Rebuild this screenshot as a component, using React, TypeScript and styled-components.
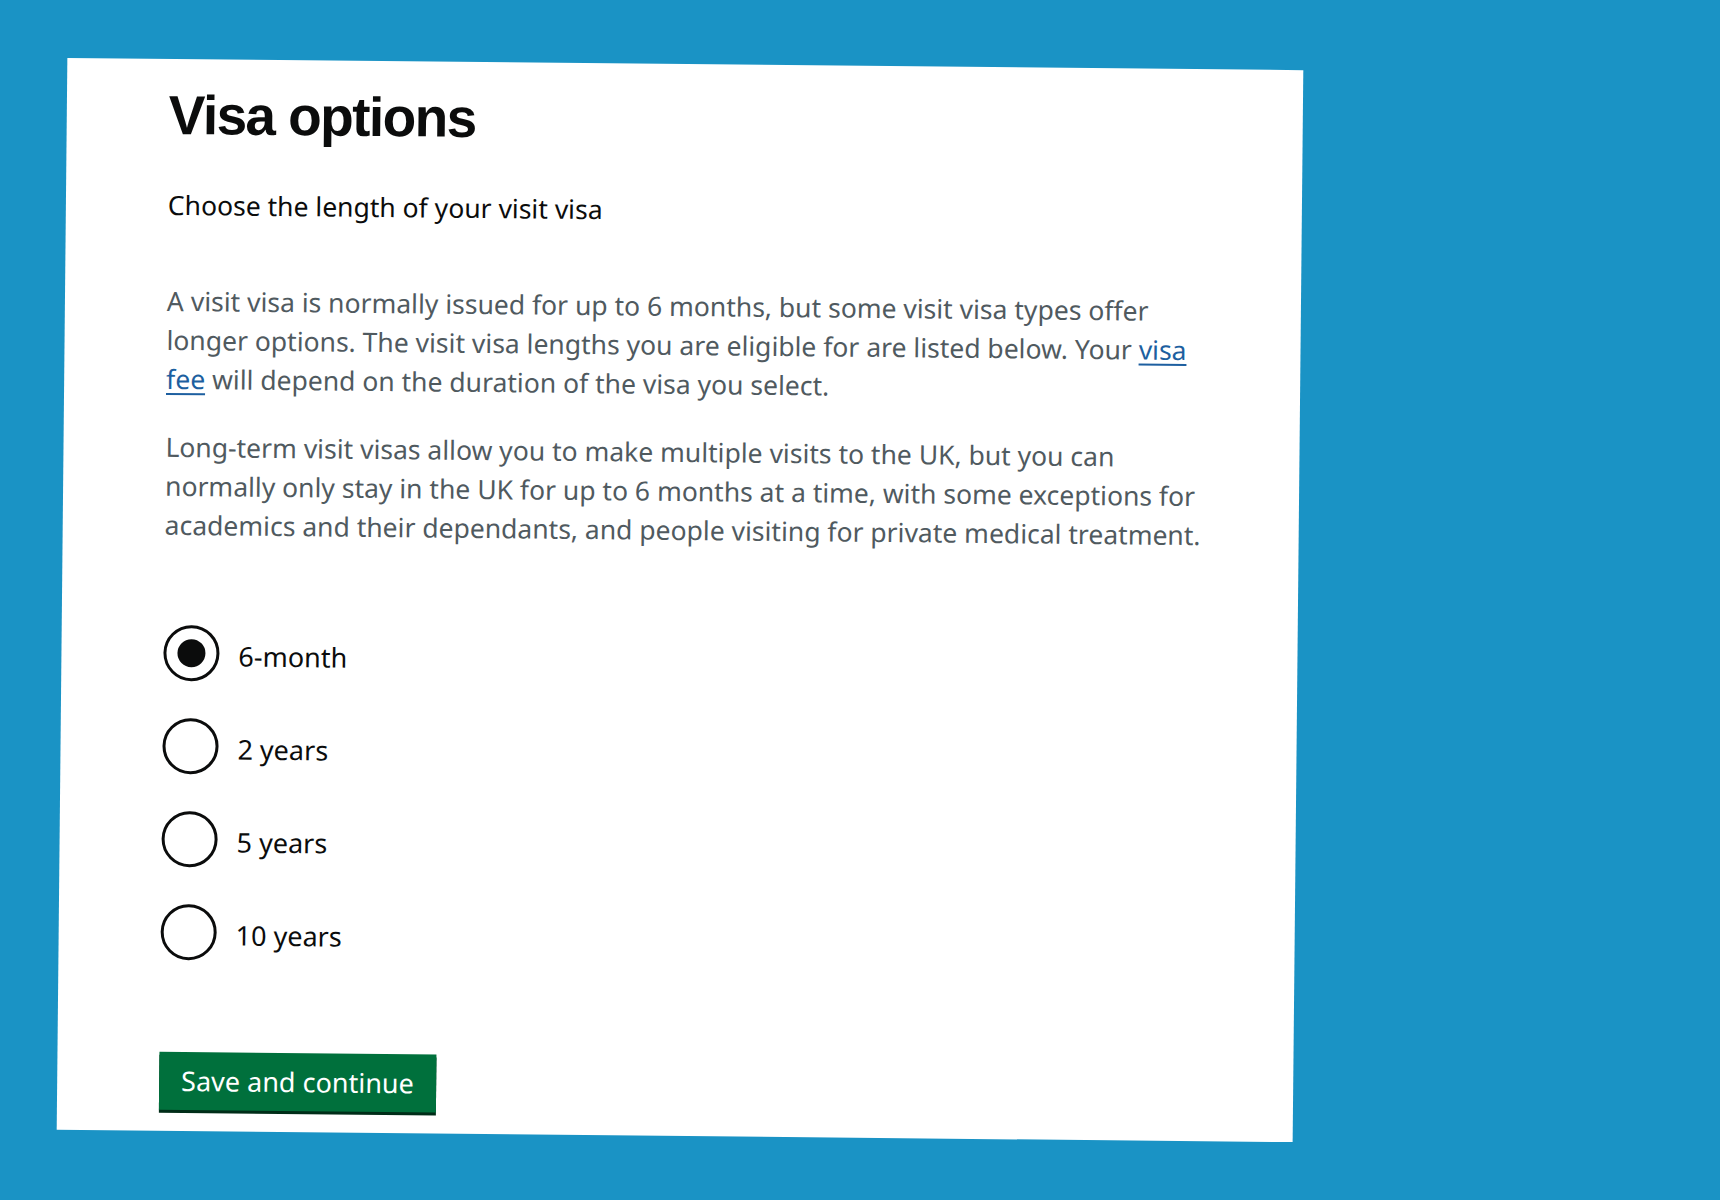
import React, { useState } from "react";
import styled, { createGlobalStyle } from "styled-components";

const GlobalStyle = createGlobalStyle`
  html, body {
    margin: 0;
    padding: 0;
    background: #1a93c5;
  }
  body {
    font-family: "Noto Sans", "Liberation Sans", Arial, sans-serif;
    color: #0b0c0c;
  }
`;

const Stage = styled.div`
  width: 1720px;
  height: 1200px;
  overflow: hidden;
  background: #1a93c5;
  padding: 64px 0 0 61.5px;
  box-sizing: border-box;
`;

const Card = styled.main`
  width: 1236px;
  height: 1072px;
  background: #ffffff;
  box-sizing: border-box;
  padding: 26px 0 0 102px;
  transform: rotate(0.57deg);
  display: flex;
  flex-direction: column;
  align-items: flex-start;
`;

const Title = styled.h1`
  margin: 0;
  font-family: "Liberation Sans", Arial, sans-serif;
  font-size: 55px;
  line-height: 60px;
  font-weight: 700;
  letter-spacing: -1.6px;
  color: #0b0c0c;
`;

const Lead = styled.p`
  margin: 41px 0 0;
  font-size: 26.5px;
  line-height: 39px;
  color: #0b0c0c;
`;

const Body = styled.p<{ $gap: number }>`
  margin: ${(p) => p.$gap}px 0 0;
  font-size: 26.5px;
  line-height: 39px;
  color: #505a5f;
  white-space: nowrap;
`;

const TextLink = styled.a`
  color: #1d5fa0;
  text-decoration: underline;
  text-decoration-thickness: 2px;
  text-underline-offset: 4px;
`;

const RadioList = styled.div`
  margin-top: 80px;
  display: flex;
  flex-direction: column;
  gap: 37px;
`;

const RadioRow = styled.label`
  display: flex;
  align-items: center;
  gap: 19px;
  cursor: pointer;
`;

const Circle = styled.span<{ $checked: boolean }>`
  width: 56px;
  height: 56px;
  border: 3px solid #0b0c0c;
  border-radius: 50%;
  box-sizing: border-box;
  display: flex;
  align-items: center;
  justify-content: center;
  flex-shrink: 0;

  &::after {
    content: "";
    width: 28px;
    height: 28px;
    border-radius: 50%;
    background: #0b0c0c;
    display: ${(p) => (p.$checked ? "block" : "none")};
  }
`;

const RadioText = styled.span`
  font-size: 27px;
  line-height: 32px;
  color: #0b0c0c;
  padding-top: 6px;
`;

const Button = styled.button`
  margin-top: 92px;
  background: #00703c;
  color: #ffffff;
  border: 0;
  border-radius: 0;
  font-family: inherit;
  font-size: 27px;
  line-height: 32px;
  padding: 13px 22px;
  box-shadow: 0 3px 0 #002d18;
  cursor: pointer;
`;

const options = ["6-month", "2 years", "5 years", "10 years"];

export default function App() {
  const [choice, setChoice] = useState("6-month");

  return (
    <>
      <GlobalStyle />
      <Stage>
        <Card>
          <Title>Visa options</Title>
          <Lead>Choose the length of your visit visa</Lead>
          <Body $gap={57}>
            A visit visa is normally issued for up to 6 months, but some visit visa types offer
            <br />
            longer options. The visit visa lengths you are eligible for are listed below. Your{" "}
            <TextLink href="#">visa</TextLink>
            <br />
            <TextLink href="#">fee</TextLink> will depend on the duration of the visa you select.
          </Body>
          <Body $gap={29}>
            Long-term visit visas allow you to make multiple visits to the UK, but you can
            <br />
            normally only stay in the UK for up to 6 months at a time, with some exceptions for
            <br />
            academics and their dependants, and people visiting for private medical treatment.
          </Body>
          <RadioList>
            {options.map((o) => (
              <RadioRow key={o} onClick={() => setChoice(o)}>
                <Circle $checked={choice === o} />
                <RadioText>{o}</RadioText>
              </RadioRow>
            ))}
          </RadioList>
          <Button>Save and continue</Button>
        </Card>
      </Stage>
    </>
  );
}
